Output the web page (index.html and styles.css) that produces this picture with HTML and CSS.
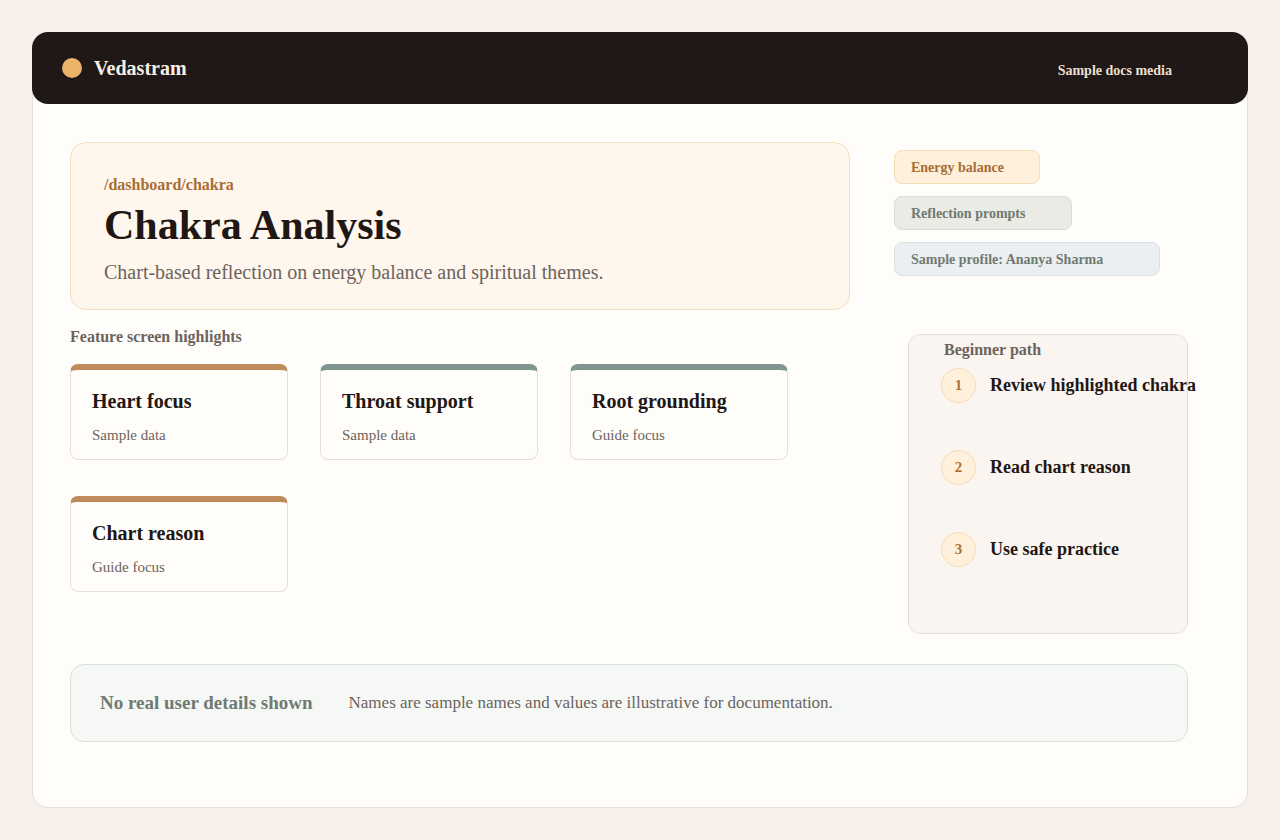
FILE: index.html
```html
<!DOCTYPE html>
<html lang="en">
<head>
<meta charset="utf-8">
<title>Vedastram - Chakra Analysis</title>
<link rel="stylesheet" href="styles.css">
</head>
<body>
<div class="frame">
  <header class="topbar">
    <div class="brand"><span class="dot"></span>Vedastram</div>
    <nav class="nav">Sample docs media</nav>
  </header>
  <main class="content">
    <div class="grid">
      <section class="hero">
        <div class="path-label">/dashboard/chakra</div>
        <h1 class="title">Chakra Analysis</h1>
        <p class="subtitle">Chart-based reflection on energy balance and spiritual themes.</p>
      </section>
      <aside class="pills">
        <span class="pill pill-warm">Energy balance</span>
        <span class="pill pill-sage">Reflection prompts</span>
        <span class="pill pill-blue">Sample profile: Ananya Sharma</span>
      </aside>
      <section class="features">
        <h2 class="section-title">Feature screen highlights</h2>
        <div class="cards">
          <div class="card card-brown"><div class="card-title">Heart focus</div><div class="card-sub">Sample data</div></div>
          <div class="card card-sage"><div class="card-title">Throat support</div><div class="card-sub">Sample data</div></div>
          <div class="card card-sage"><div class="card-title">Root grounding</div><div class="card-sub">Guide focus</div></div>
          <div class="card card-brown"><div class="card-title">Chart reason</div><div class="card-sub">Guide focus</div></div>
        </div>
      </section>
      <aside class="path">
        <div class="path-title">Beginner path</div>
        <ol class="steps">
          <li class="step"><span class="num">1</span><span class="step-text">Review highlighted chakra</span></li>
          <li class="step"><span class="num">2</span><span class="step-text">Read chart reason</span></li>
          <li class="step"><span class="num">3</span><span class="step-text">Use safe practice</span></li>
        </ol>
      </aside>
    </div>
    <div class="note">
      <strong class="note-title">No real user details shown</strong>
      <span class="note-text">Names are sample names and values are illustrative for documentation.</span>
    </div>
  </main>
</div>
</body>
</html>
```

FILE: styles.css
```css
* { box-sizing: border-box; }
html, body { margin: 0; padding: 0; }
body {
  background: #f7efea;
  font-family: "Liberation Serif", "Times New Roman", serif;
  padding: 32px;
  width: 1280px;
  height: 840px;
}
.frame {
  width: 1216px;
  height: 776px;
  background: #fffdfa;
  border: 1px solid #e3dfd9;
  border-radius: 16px;
}
.topbar {
  margin: -1px -1px 0 -1px;
  height: 72px;
  background: #201816;
  border-radius: 16px;
  display: flex;
  align-items: center;
  justify-content: space-between;
  padding: 0 76px 0 30px;
}
.brand {
  display: flex;
  align-items: center;
  gap: 12px;
  color: #f7efe5;
  font-weight: 700;
  font-size: 20px;
}
.dot {
  width: 20px;
  height: 20px;
  border-radius: 50%;
  background: #e9b469;
}
.nav {
  color: #eadfcf;
  font-weight: 700;
  font-size: 14px;
  padding-top: 5px;
}
.content {
  padding: 38px 59px 0 37px;
}
.grid {
  display: grid;
  grid-template-columns: 780px 1fr;
  column-gap: 44px;
  row-gap: 18px;
  align-items: start;
}
.hero {
  height: 168px;
  background: #fff7ee;
  border: 1px solid #f4dfc0;
  border-radius: 16px;
  padding: 33px 33px 0 33px;
}
.path-label {
  color: #a86d32;
  font-weight: 700;
  font-size: 16px;
  line-height: 18px;
}
.title {
  margin: 7px 0 0 0;
  font-size: 42px;
  line-height: 48px;
  font-weight: 700;
  color: #1f1714;
}
.subtitle {
  margin: 11px 0 0 0;
  font-size: 20px;
  line-height: 24px;
  color: #6c635c;
}
.pills {
  margin-top: 8px;
  display: flex;
  flex-direction: column;
  align-items: flex-start;
  gap: 12px;
}
.pill {
  height: 34px;
  line-height: 33px;
  border-radius: 8px;
  padding: 0 16px;
  font-weight: 700;
  font-size: 14px;
}
.pill-warm { width: 146px; background: #fff0dc; border: 1px solid #f4dcb6; color: #a86d32; }
.pill-sage { width: 178px; background: #ebebe5; border: 1px solid #d9ddd5; color: #6f7a72; }
.pill-blue { width: 266px; background: #ebeff1; border: 1px solid #d8e2e6; color: #6f7a72; }
.section-title {
  margin: 0;
  font-size: 16px;
  line-height: 18px;
  font-weight: 700;
  color: #6c635c;
}
.cards {
  margin-top: 18px;
  display: grid;
  grid-template-columns: repeat(3, 218px);
  column-gap: 32px;
  row-gap: 36px;
}
.card {
  height: 96px;
  background: #fffdfa;
  border: 1px solid #e4e1db;
  border-top-width: 6px;
  border-radius: 8px;
  padding: 20px 21px 0 21px;
}
.card-brown { border-top-color: #c08b5a; }
.card-sage { border-top-color: #7f9590; }
.card-title {
  font-size: 20px;
  line-height: 22px;
  font-weight: 700;
  color: #1f1714;
}
.card-sub {
  margin-top: 14px;
  font-size: 15px;
  line-height: 18px;
  color: #6c635c;
}
.path {
  margin: 6px 0 0 14px;
  width: 280px;
  height: 300px;
  background: #faf5f0;
  border: 1px solid #e6e0d9;
  border-radius: 12px;
  padding: 5px 0 0 32px;
}
.path-title {
  margin-left: 3px;
  font-size: 16px;
  line-height: 20px;
  font-weight: 700;
  color: #6c635c;
}
.steps {
  list-style: none;
  margin: 8px 0 0 0;
  padding: 0;
  display: flex;
  flex-direction: column;
  gap: 47px;
}
.step {
  display: flex;
  align-items: center;
  gap: 14px;
  white-space: nowrap;
}
.num {
  flex: none;
  width: 35px;
  height: 35px;
  border-radius: 50%;
  background: #fff0dc;
  border: 1px solid #f4dcb6;
  color: #b07033;
  font-weight: 700;
  font-size: 15px;
  display: flex;
  align-items: center;
  justify-content: center;
}
.step-text {
  font-size: 18px;
  font-weight: 700;
  color: #1f1714;
}
.note {
  margin-top: 30px;
  height: 78px;
  background: #f6f8f6;
  border: 1px solid #d9e0db;
  border-radius: 14px;
  display: flex;
  align-items: center;
  padding: 0 0 0 29px;
  gap: 36px;
}
.note-title {
  font-size: 19px;
  color: #6f7a72;
  font-weight: 700;
}
.note-text {
  font-size: 17px;
  color: #6c635c;
}
```
